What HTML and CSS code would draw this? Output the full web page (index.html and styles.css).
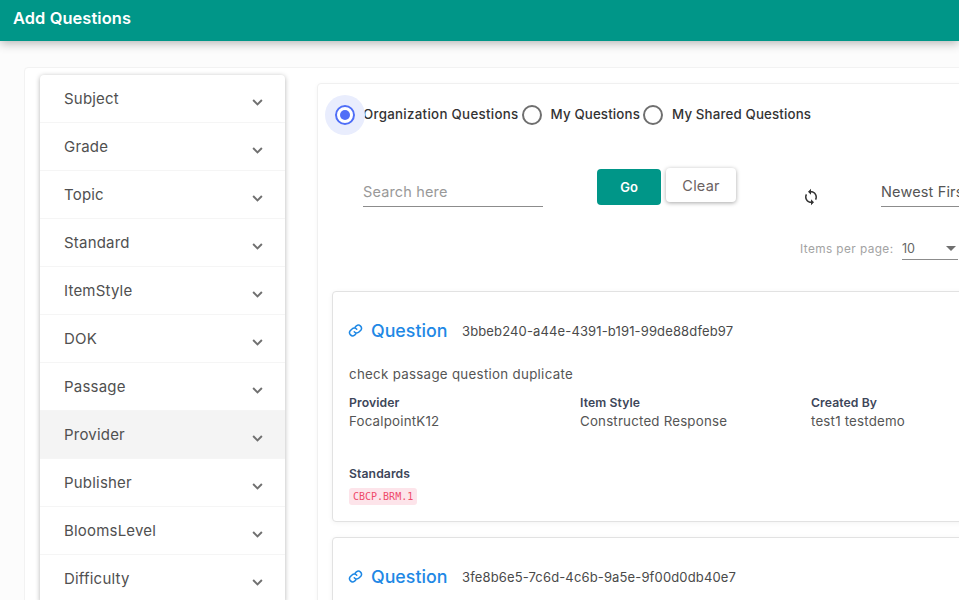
FILE: index.html
```html
<!DOCTYPE html>
<html lang="en">
<head>
<meta charset="utf-8">
<title>Add Questions</title>
<link rel="stylesheet" href="styles.css">
</head>
<body>
<header class="topbar">Add Questions</header>
<div class="shell">
  <aside class="filters">
    <div class="filter"><span>Subject</span><svg class="chev" viewBox="0 0 12 8"><path d="M1 1.2l5 5 5-5"/></svg></div>
    <div class="filter"><span>Grade</span><svg class="chev" viewBox="0 0 12 8"><path d="M1 1.2l5 5 5-5"/></svg></div>
    <div class="filter"><span>Topic</span><svg class="chev" viewBox="0 0 12 8"><path d="M1 1.2l5 5 5-5"/></svg></div>
    <div class="filter"><span>Standard</span><svg class="chev" viewBox="0 0 12 8"><path d="M1 1.2l5 5 5-5"/></svg></div>
    <div class="filter"><span>ItemStyle</span><svg class="chev" viewBox="0 0 12 8"><path d="M1 1.2l5 5 5-5"/></svg></div>
    <div class="filter"><span>DOK</span><svg class="chev" viewBox="0 0 12 8"><path d="M1 1.2l5 5 5-5"/></svg></div>
    <div class="filter"><span>Passage</span><svg class="chev" viewBox="0 0 12 8"><path d="M1 1.2l5 5 5-5"/></svg></div>
    <div class="filter active"><span>Provider</span><svg class="chev" viewBox="0 0 12 8"><path d="M1 1.2l5 5 5-5"/></svg></div>
    <div class="filter"><span>Publisher</span><svg class="chev" viewBox="0 0 12 8"><path d="M1 1.2l5 5 5-5"/></svg></div>
    <div class="filter"><span>BloomsLevel</span><svg class="chev" viewBox="0 0 12 8"><path d="M1 1.2l5 5 5-5"/></svg></div>
    <div class="filter"><span>Difficulty</span><svg class="chev" viewBox="0 0 12 8"><path d="M1 1.2l5 5 5-5"/></svg></div>
  </aside>
  <main class="panel">
    <div class="radios">
      <span class="radio on"><i></i></span><span class="rlabel first">Organization Questions</span>
      <span class="radio"></span><span class="rlabel">My Questions</span>
      <span class="radio"></span><span class="rlabel">My Shared Questions</span>
    </div>
    <div class="searchrow">
      <div class="field search">Search here</div>
      <button class="go">Go</button>
      <button class="clear">Clear</button>
      <svg class="sync" viewBox="0 0 24 24"><path d="M12 4V1L8 5l4 4V6c3.31 0 6 2.69 6 6 0 1.01-.25 1.97-.7 2.8l1.46 1.46A7.93 7.93 0 0 0 20 12c0-4.42-3.58-8-8-8zm0 14c-3.31 0-6-2.69-6-6 0-1.01.25-1.97.7-2.8L5.24 7.74A7.93 7.93 0 0 0 4 12c0 4.42 3.58 8 8 8v3l4-4-4-4v3z"/></svg>
      <div class="field sort">Newest First</div>
    </div>
    <div class="pager">
      <span class="plabel">Items per page:</span>
      <div class="psel"><span>10</span><b></b></div>
    </div>
    <article class="card">
      <div class="qhead">
        <svg class="link" viewBox="0 0 24 24"><path d="M10 14a5 5 0 0 0 7.5.5l3-3a5 5 0 0 0-7-7l-1.7 1.7M14 10a5 5 0 0 0-7.5-.5l-3 3a5 5 0 0 0 7 7l1.7-1.7"/></svg>
        <span class="qtitle">Question</span><span class="qid">3bbeb240-a44e-4391-b191-99de88dfeb97</span>
      </div>
      <p class="qtext">check passage question duplicate</p>
      <div class="meta">
        <div><div class="mk">Provider</div><div class="mv">FocalpointK12</div></div>
        <div><div class="mk">Item Style</div><div class="mv">Constructed Response</div></div>
        <div><div class="mk">Created By</div><div class="mv">test1 testdemo</div></div>
      </div>
      <div class="mk std">Standards</div>
      <code class="tag">CBCP.BRM.1</code>
    </article>
    <article class="card">
      <div class="qhead">
        <svg class="link" viewBox="0 0 24 24"><path d="M10 14a5 5 0 0 0 7.5.5l3-3a5 5 0 0 0-7-7l-1.7 1.7M14 10a5 5 0 0 0-7.5-.5l-3 3a5 5 0 0 0 7 7l1.7-1.7"/></svg>
        <span class="qtitle">Question</span><span class="qid">3fe8b6e5-7c6d-4c6b-9a5e-9f00d0db40e7</span>
      </div>
    </article>
  </main>
</div>
</body>
</html>
```
FILE: styles.css
```css
* { box-sizing: border-box; }
html, body { margin: 0; height: 600px; overflow: hidden; }
body { background: #fcfcfc; font-family: Inter, "Noto Sans", sans-serif; color: #444; width: 959px; }
.topbar { height: 41px; background: #009688; color: #fff; font-size: 16.4px; font-weight: 600; line-height: 37px; padding-left: 13px; box-shadow: 0 2px 10px rgba(0,0,0,.3); letter-spacing: .1px; position: relative; }
.shell { margin: 26px 0 0 24px; width: 960px; height: 560px; overflow: hidden; background: #fff; border: 1px solid #f2f2f2; border-radius: 4px; display: flex; align-items: flex-start; padding: 7px 0 0 15px; }
.filters { width: 245px; flex: none; background: #fff; border-radius: 4px; box-shadow: 0 1px 5px rgba(0,0,0,.3); }
.filter { height: 48px; padding: 0 22px 0 24px; display: flex; justify-content: space-between; align-items: center; font-size: 15px; letter-spacing: .2px; color: #505050; border-bottom: 1px solid #f5f5f5; }
.filter.active { background: #f4f4f4; }
.chev { width: 11px; height: 7px; margin-top: 7px; fill: none; stroke: #707070; stroke-width: 2.2; }
.panel { margin: 8px 0 0 32px; width: 660px; flex: none; background: #fff; border: 1px solid #f0f0f0; border-radius: 4px; padding: 0 0 0 14px; box-shadow: 0 1px 4px rgba(0,0,0,.04); height: 560px; }
.radios { display: flex; align-items: center; height: 40px; margin: 11px 0 0 0; }
.radio { width: 20px; height: 20px; border: 2px solid #6f6f6f; border-radius: 50%; flex: none; position: relative; margin-left: 3px; }
.radio.on { border-color: #4f6ef7; display: flex; align-items: center; justify-content: center; margin: 0 0 0 3px; box-shadow: 0 0 0 10px #e9edfd; }
.radio.on i { width: 10px; height: 10px; border-radius: 50%; background: #4f6ef7; }
.rlabel { font-size: 13.3px; letter-spacing: .15px; font-weight: 500; color: #333; margin: -2px 0 0 9px; white-space: nowrap; }
.rlabel.first { margin-left: 8px; letter-spacing: .3px; }
.searchrow { display: flex; align-items: flex-start; height: 75px; margin-top: 25px; margin-left: 14px; }
.field { height: 26px; border-bottom: 1px solid #8c8c8c; font-size: 14.5px; letter-spacing: .15px; line-height: 22px; flex: none; white-space: nowrap; overflow: hidden; }
.search { width: 180px; margin: 21px 0 0 17px; color: #999; }
button { font-family: inherit; border: 0; }
.go { width: 64px; height: 36px; margin: 9px 0 0 54px; background: #009688; color: #fff; font-size: 13px; font-weight: 600; border-radius: 4px; flex: none; }
.clear { width: 70px; height: 34px; margin: 8px 0 0 5px; background: #fff; color: #6b6262; font-size: 14.5px; letter-spacing: .2px; border-radius: 4px; box-shadow: 0 1px 4px rgba(0,0,0,.35); flex: none; }
.sync { width: 18px; height: 18px; margin: 28px 0 0 66px; flex: none; fill: #333; }
.sort { width: 100px; margin: 21px 0 0 61px; color: #555; }
.pager { display: flex; align-items: flex-start; height: 56px; margin-top: 0; padding-left: 468px; }
.plabel { font-size: 11.8px; letter-spacing: .42px; color: #a3a3a3; margin-top: 7px; white-space: nowrap; width: 102px; }
.psel { width: 56px; height: 25px; border-bottom: 1px solid #8c8c8c; font-size: 12.6px; color: #666; display: flex; justify-content: space-between; padding-top: 8px; }
.psel span { line-height: 1; }
.psel b { width: 0; height: 0; border: 5px solid transparent; border-top-color: #6f6f6f; border-bottom: 0; margin: 3px 2px 0 0; }
.card { width: 660px; height: 231px; border: 1px solid #e2e2e2; border-radius: 4px; background: #fff; padding: 0 16px; margin-bottom: 15px; box-shadow: 0 1px 5px rgba(0,0,0,.05); }
.qhead { display: flex; align-items: center; height: 24px; margin-top: 26px; }
.link { width: 15px; height: 15px; margin-left: -1px; flex: none; fill: none; stroke: #1e88e5; stroke-width: 2.4; stroke-linecap: round; }
.qtitle { font-size: 17.8px; font-weight: 500; color: #1e88e5; margin-left: 8px; width: 91px; flex: none; }
.qid { font-size: 13px; letter-spacing: .14px; color: #4a4a4a; white-space: nowrap; margin-top: 2px; }
.qtext { margin: 22px 0 0; font-size: 13.3px; letter-spacing: .3px; line-height: 20px; color: #555; }
.meta { display: grid; grid-template-columns: 231px 231px 1fr; margin-top: 10px; }
.mk { font-size: 12.2px; font-weight: 600; color: #3d4659; line-height: 18px; letter-spacing: .1px; }
.mv { font-size: 13.3px; letter-spacing: .2px; color: #555; line-height: 18px; }
.std { margin-top: 35px; }
.tag { display: inline-block; font-family: "DejaVu Sans Mono", monospace; font-size: 10px; line-height: 17px; height: 17px; padding: 0 4px; margin-top: 5px; color: #ef4a6b; background: #fde4ea; border-radius: 3px; }
```
